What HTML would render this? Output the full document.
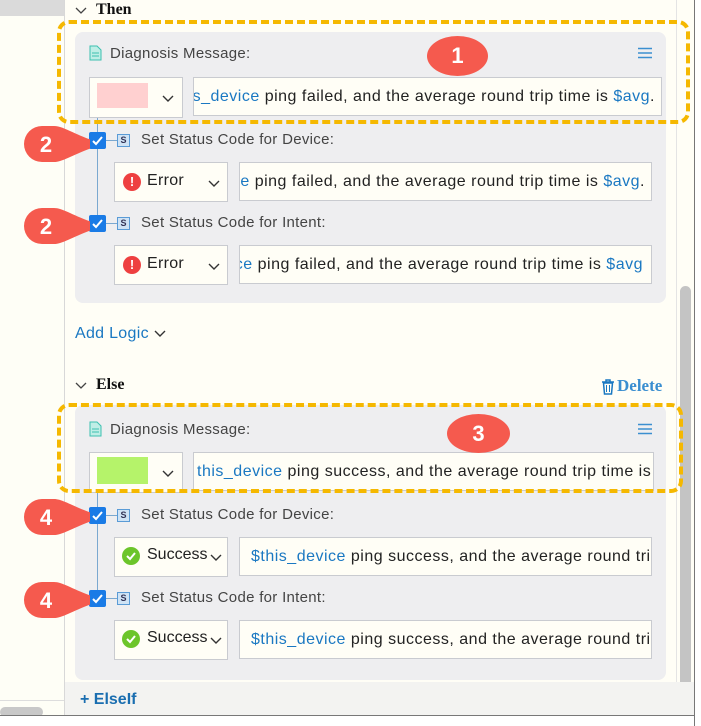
<!DOCTYPE html>
<html><head><style>
*{box-sizing:border-box;margin:0;padding:0}
body{width:701px;height:726px;overflow:hidden;background:#fff;font-family:"Liberation Sans",sans-serif;position:relative}
.a{position:absolute}
.t{font-size:15px;color:#333;white-space:nowrap;letter-spacing:0.3px}
.card{background:#eeeef0;border-radius:8px}
.box{background:#fffef6;border:1px solid #c9cbd0}
.inp{overflow:hidden;white-space:nowrap;font-size:16px;letter-spacing:0.5px;color:#222;display:flex;align-items:center;padding:0 6px}
.inp.r{justify-content:flex-end}
.b{color:#1a78c2}
.cb{width:17px;height:17px;background:#1a7be6;border-radius:2px}
.s{width:13px;height:13px;border:1px solid #5a9bd6;background:#cfe3f5;font-size:9px;color:#335;text-align:center;line-height:11px;font-weight:bold}
.dash{border:4px dashed #f5b800;border-radius:12px}
.badge{background:#f55a4e;color:#fff;font-weight:bold;font-size:22px;text-align:center}
</style></head><body>
<div class="a" style="left:0;top:0;width:65px;height:726px;background:#fefef6;border-right:1px solid #d8d8d8"></div>
<div class="a" style="left:0;top:0;width:64px;height:16px;background:#dadada"></div>
<div class="a" style="left:0;top:700px;width:64px;height:1px;background:#ddd"></div>
<div class="a" style="left:0;top:707px;width:43px;height:10px;background:#c8c8c8;border-radius:5px"></div>
<div class="a" style="left:65px;top:0;width:630px;height:716px;background:#fffef6"></div>
<div class="a" style="left:676px;top:0;width:1px;height:682px;background:#e4e4e4"></div>
<div class="a" style="left:680px;top:286px;width:11px;height:404px;background:#c4c4c4;border-radius:6px"></div>
<div class="a" style="left:65px;top:682px;width:630px;height:34px;background:#f3f3f1"></div>
<div class="a" style="left:0;top:715px;width:701px;height:11px;background:#fff;border-top:1px solid #777"></div>
<div class="a" style="left:694px;top:0;width:7px;height:726px;background:#fff;border-left:1px solid #777"></div>

<svg class="a" style="left:75px;top:7px" width="12" height="8"><path d="M1 1l5 5 5-5" stroke="#444" fill="none" stroke-width="1.3"/></svg>
<div class="a" style="left:96px;top:1px;font-family:'Liberation Serif',serif;font-weight:bold;font-size:16px;color:#111">Then</div>

<div class="a card" style="left:75px;top:32px;width:591px;height:271px"></div>
<svg class="a" style="left:89px;top:45px" width="13" height="16"><path d="M1 1h7l4 4v10H1z" fill="#bfeee6" stroke="#3cc0b0"/><path d="M3 8h7M3 11h7" stroke="#3cc0b0"/></svg>
<div class="a t" style="left:110px;top:45px;color:#444">Diagnosis Message:</div>
<svg class="a" style="left:638px;top:47px" width="14" height="12"><path d="M0 1.5h14M0 6h14M0 10.5h14" stroke="#3b8fd0" stroke-width="1.5"/></svg>
<div class="a box" style="left:89px;top:77px;width:94px;height:41px"></div>
<div class="a" style="left:97px;top:83px;width:51px;height:25px;background:#ffd0d0"></div>
<svg class="a" style="left:162px;top:95px" width="12" height="8"><path d="M1 1l5 5 5-5" stroke="#333" fill="none" stroke-width="1.4"/></svg>
<div class="a box inp r" style="left:193px;top:77px;width:469px;height:39px"><span><span class="b">$this_device</span> ping failed, and the average round trip time is <span class="b">$avg</span>.</span></div>

<div class="a" style="left:97px;top:118px;width:1px;height:106px;background:#7aa8d0"></div>
<div class="a cb" style="left:89px;top:132px"></div>
<svg class="a" style="left:91px;top:135px" width="13" height="11"><path d="M2 6l3 3 6-7" stroke="#fff" stroke-width="2" fill="none"/></svg>
<div class="a" style="left:106px;top:140px;width:11px;height:1px;background:#7aa8d0"></div>
<div class="a s" style="left:117px;top:134px">S</div>
<div class="a t" style="left:141px;top:131px;color:#444">Set Status Code for Device:</div>
<div class="a box" style="left:114px;top:162px;width:114px;height:40px"></div>
<div class="a" style="left:123px;top:173px;width:18px;height:18px;border-radius:50%;background:#ee4040;color:#fff;font-weight:bold;font-size:13px;text-align:center;line-height:18px">!</div>
<div class="a t" style="left:147px;top:172px;color:#222;font-size:16px">Error</div>
<svg class="a" style="left:208px;top:180px" width="12" height="8"><path d="M1 1l5 5 5-5" stroke="#333" fill="none" stroke-width="1.4"/></svg>
<div class="a box inp r" style="left:239px;top:162px;width:413px;height:39px"><span><span class="b">$this_device</span> ping failed, and the average round trip time is <span class="b">$avg</span>.</span></div>

<div class="a cb" style="left:89px;top:215px"></div>
<svg class="a" style="left:91px;top:218px" width="13" height="11"><path d="M2 6l3 3 6-7" stroke="#fff" stroke-width="2" fill="none"/></svg>
<div class="a" style="left:106px;top:223px;width:11px;height:1px;background:#7aa8d0"></div>
<div class="a s" style="left:117px;top:217px">S</div>
<div class="a t" style="left:141px;top:214px;color:#444">Set Status Code for Intent:</div>
<div class="a box" style="left:114px;top:245px;width:114px;height:40px"></div>
<div class="a" style="left:123px;top:256px;width:18px;height:18px;border-radius:50%;background:#ee4040;color:#fff;font-weight:bold;font-size:13px;text-align:center;line-height:18px">!</div>
<div class="a t" style="left:147px;top:255px;color:#222;font-size:16px">Error</div>
<svg class="a" style="left:208px;top:263px" width="12" height="8"><path d="M1 1l5 5 5-5" stroke="#333" fill="none" stroke-width="1.4"/></svg>
<div class="a box inp r" style="left:239px;top:245px;width:413px;height:39px;padding-right:8px"><span><span class="b">$this_device</span> ping failed, and the average round trip time is <span class="b">$avg</span></span></div>

<div class="a t" style="left:75px;top:325px;color:#1a78c2;font-size:16px">Add Logic <svg width="12" height="8"><path d="M1 1l5 5 5-5" stroke="#333" fill="none" stroke-width="1.4"/></svg></div>

<svg class="a" style="left:75px;top:382px" width="12" height="8"><path d="M1 1l5 5 5-5" stroke="#444" fill="none" stroke-width="1.3"/></svg>
<div class="a" style="left:96px;top:376px;font-family:'Liberation Serif',serif;font-weight:bold;font-size:16px;color:#111">Else</div>
<svg class="a" style="left:601px;top:379px" width="14" height="16"><path d="M1 3h12M5 3V1h4v2M2.5 4h9l-1 11h-7z" stroke="#1a78c2" fill="none" stroke-width="1.5"/><path d="M5.5 6v7M8.5 6v7" stroke="#1a78c2"/></svg>
<div class="a" style="left:617px;top:376px;font-family:'Liberation Serif',serif;font-weight:bold;font-size:17px;color:#3a8ed0">Delete</div>

<div class="a card" style="left:75px;top:405px;width:591px;height:275px"></div>
<svg class="a" style="left:89px;top:421px" width="13" height="16"><path d="M1 1h7l4 4v10H1z" fill="#bfeee6" stroke="#3cc0b0"/><path d="M3 8h7M3 11h7" stroke="#3cc0b0"/></svg>
<div class="a t" style="left:110px;top:421px;color:#444">Diagnosis Message:</div>
<svg class="a" style="left:638px;top:423px" width="14" height="12"><path d="M0 1.5h14M0 6h14M0 10.5h14" stroke="#3b8fd0" stroke-width="1.5"/></svg>
<div class="a box" style="left:89px;top:452px;width:94px;height:41px"></div>
<div class="a" style="left:97px;top:457px;width:51px;height:27px;background:#b5f36a"></div>
<svg class="a" style="left:162px;top:470px" width="12" height="8"><path d="M1 1l5 5 5-5" stroke="#333" fill="none" stroke-width="1.4"/></svg>
<div class="a box inp" style="left:193px;top:452px;width:461px;height:39px;padding-left:3px"><span><span class="b">this_device</span> ping success, and the average round trip time is <span class="b">$avg</span>.</span></div>

<div class="a" style="left:97px;top:493px;width:1px;height:106px;background:#7aa8d0"></div>
<div class="a cb" style="left:89px;top:507px"></div>
<svg class="a" style="left:91px;top:510px" width="13" height="11"><path d="M2 6l3 3 6-7" stroke="#fff" stroke-width="2" fill="none"/></svg>
<div class="a" style="left:106px;top:515px;width:11px;height:1px;background:#7aa8d0"></div>
<div class="a s" style="left:117px;top:509px">S</div>
<div class="a t" style="left:141px;top:506px;color:#444">Set Status Code for Device:</div>
<div class="a box" style="left:114px;top:537px;width:114px;height:40px"></div>
<div class="a" style="left:122px;top:547px;width:18px;height:18px;border-radius:50%;background:#6cc52a"></div>
<svg class="a" style="left:124px;top:550px" width="14" height="12"><path d="M3 6l3 3 5-6" stroke="#fff" stroke-width="2" fill="none"/></svg>
<div class="a t" style="left:147px;top:546px;color:#222;font-size:16px;letter-spacing:0">Success</div>
<svg class="a" style="left:210px;top:554px" width="12" height="8"><path d="M1 1l5 5 5-5" stroke="#333" fill="none" stroke-width="1.4"/></svg>
<div class="a box inp" style="left:239px;top:537px;width:413px;height:39px;padding-left:11px"><span><span class="b">$this_device</span> ping success, and the average round trip time</span></div>

<div class="a cb" style="left:89px;top:590px"></div>
<svg class="a" style="left:91px;top:593px" width="13" height="11"><path d="M2 6l3 3 6-7" stroke="#fff" stroke-width="2" fill="none"/></svg>
<div class="a" style="left:106px;top:598px;width:11px;height:1px;background:#7aa8d0"></div>
<div class="a s" style="left:117px;top:592px">S</div>
<div class="a t" style="left:141px;top:589px;color:#444">Set Status Code for Intent:</div>
<div class="a box" style="left:114px;top:620px;width:114px;height:40px"></div>
<div class="a" style="left:122px;top:630px;width:18px;height:18px;border-radius:50%;background:#6cc52a"></div>
<svg class="a" style="left:124px;top:633px" width="14" height="12"><path d="M3 6l3 3 5-6" stroke="#fff" stroke-width="2" fill="none"/></svg>
<div class="a t" style="left:147px;top:629px;color:#222;font-size:16px;letter-spacing:0">Success</div>
<svg class="a" style="left:210px;top:637px" width="12" height="8"><path d="M1 1l5 5 5-5" stroke="#333" fill="none" stroke-width="1.4"/></svg>
<div class="a box inp" style="left:239px;top:620px;width:413px;height:39px;padding-left:11px"><span><span class="b">$this_device</span> ping success, and the average round trip time</span></div>

<div class="a" style="left:80px;top:691px;font-weight:bold;font-size:16px;color:#1a6eb0">+ ElseIf</div>

<div class="a dash" style="left:57px;top:20px;width:633px;height:104px"></div>
<div class="a dash" style="left:57px;top:403px;width:626px;height:90px"></div>
<div class="a badge" style="left:427px;top:36px;width:61px;height:40px;border-radius:50%;line-height:40px">1</div>
<div class="a badge" style="left:447px;top:414px;width:63px;height:39px;border-radius:50%;line-height:39px">3</div>
<svg class="a" style="left:20px;top:124px" width="70" height="40"><path d="M22 2h12c10 0 22 10 50 18-28 8-40 18-50 18H22a18 18 0 0 1 0-36z" fill="#f55a4e"/><text x="26" y="28" fill="#fff" font-family="Liberation Sans" font-weight="bold" font-size="22" text-anchor="middle">2</text></svg>
<svg class="a" style="left:20px;top:206px" width="70" height="40"><path d="M22 2h12c10 0 22 10 50 18-28 8-40 18-50 18H22a18 18 0 0 1 0-36z" fill="#f55a4e"/><text x="26" y="28" fill="#fff" font-family="Liberation Sans" font-weight="bold" font-size="22" text-anchor="middle">2</text></svg>
<svg class="a" style="left:20px;top:497px" width="70" height="40"><path d="M22 2h12c10 0 22 10 50 18-28 8-40 18-50 18H22a18 18 0 0 1 0-36z" fill="#f55a4e"/><text x="26" y="28" fill="#fff" font-family="Liberation Sans" font-weight="bold" font-size="22" text-anchor="middle">4</text></svg>
<svg class="a" style="left:20px;top:580px" width="70" height="40"><path d="M22 2h12c10 0 22 10 50 18-28 8-40 18-50 18H22a18 18 0 0 1 0-36z" fill="#f55a4e"/><text x="26" y="28" fill="#fff" font-family="Liberation Sans" font-weight="bold" font-size="22" text-anchor="middle">4</text></svg>
</body></html>
